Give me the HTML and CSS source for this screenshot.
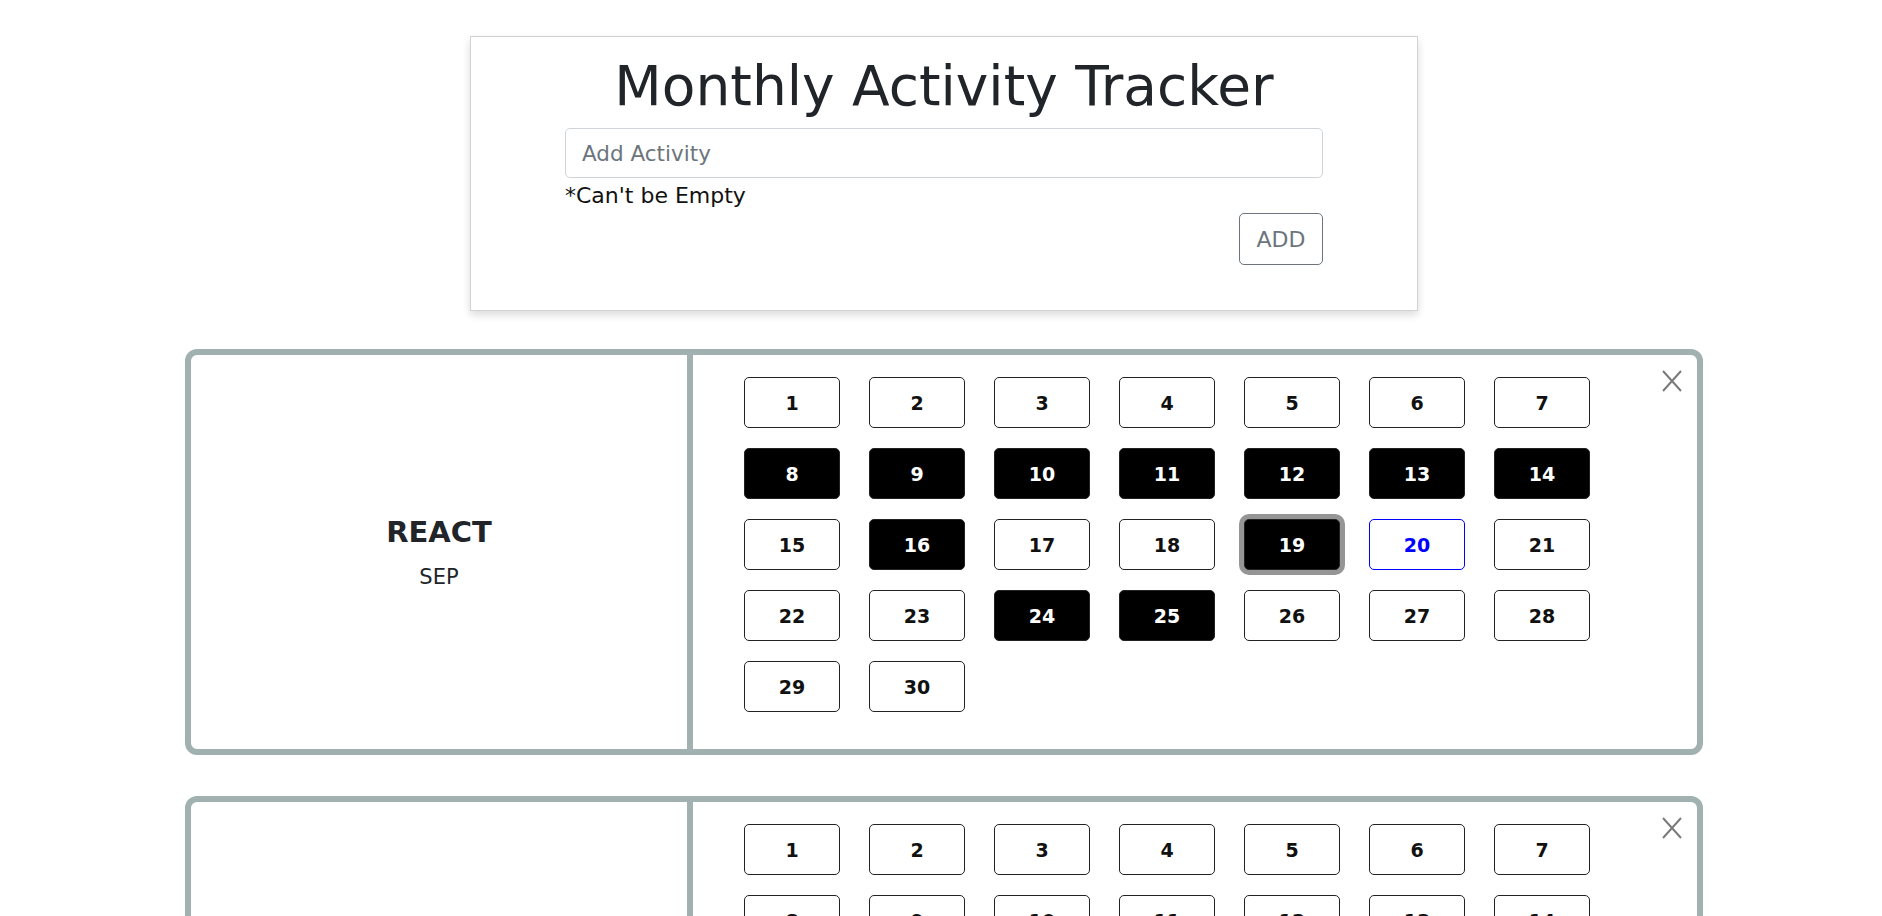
FILE: index.html
```html
<!DOCTYPE html>
<html lang="en">
<head>
<meta charset="utf-8">
<title>Monthly Activity Tracker</title>
<link rel="stylesheet" href="styles.css">
</head>
<body>
<div class="page">
  <section class="tracker-form">
    <h1 class="title">Monthly Activity Tracker</h1>
    <div class="form-body">
      <input class="activity-input" type="text" placeholder="Add Activity">
      <p class="hint">*Can't be Empty</p>
      <div class="actions"><button class="add-btn" type="button">ADD</button></div>
    </div>
  </section>

  <section class="activity-card">
    <div class="activity-info">
      <h2 class="activity-name">REACT</h2>
      <p class="activity-month">SEP</p>
    </div>
    <div class="activity-days">
      <div class="day-grid">
        <button class="day">1</button><button class="day">2</button><button class="day">3</button><button class="day">4</button><button class="day">5</button><button class="day">6</button><button class="day">7</button>
        <button class="day done">8</button><button class="day done">9</button><button class="day done">10</button><button class="day done">11</button><button class="day done">12</button><button class="day done">13</button><button class="day done">14</button>
        <button class="day">15</button><button class="day done">16</button><button class="day">17</button><button class="day">18</button><button class="day done focused">19</button><button class="day today">20</button><button class="day">21</button>
        <button class="day">22</button><button class="day">23</button><button class="day done">24</button><button class="day done">25</button><button class="day">26</button><button class="day">27</button><button class="day">28</button>
        <button class="day">29</button><button class="day">30</button>
      </div>
      <button class="close-btn" type="button" aria-label="Remove">
        <svg viewBox="0 0 20 22" width="20" height="22"><path d="M1 1 L19 21 M19 1 L1 21" stroke="#7a7a7a" stroke-width="2" fill="none"/></svg>
      </button>
    </div>
  </section>

  <section class="activity-card">
    <div class="activity-info">
      <h2 class="activity-name">JAVASCRIPT</h2>
      <p class="activity-month">SEP</p>
    </div>
    <div class="activity-days">
      <div class="day-grid">
        <button class="day">1</button><button class="day">2</button><button class="day">3</button><button class="day">4</button><button class="day">5</button><button class="day">6</button><button class="day">7</button>
        <button class="day">8</button><button class="day">9</button><button class="day">10</button><button class="day">11</button><button class="day">12</button><button class="day">13</button><button class="day">14</button>
        <button class="day">15</button><button class="day">16</button><button class="day">17</button><button class="day">18</button><button class="day">19</button><button class="day today">20</button><button class="day">21</button>
        <button class="day">22</button><button class="day">23</button><button class="day">24</button><button class="day">25</button><button class="day">26</button><button class="day">27</button><button class="day">28</button>
        <button class="day">29</button><button class="day">30</button>
      </div>
      <button class="close-btn" type="button" aria-label="Remove">
        <svg viewBox="0 0 20 22" width="20" height="22"><path d="M1 1 L19 21 M19 1 L1 21" stroke="#7a7a7a" stroke-width="2" fill="none"/></svg>
      </button>
    </div>
  </section>
</div>
</body>
</html>
```

FILE: styles.css
```css
* { box-sizing: border-box; }

html, body {
  margin: 0;
  background: #fff;
}

body {
  font-family: "DejaVu Sans", "Noto Sans", sans-serif;
  color: #212529;
}

.page {
  width: 1524px;
  margin: 0 auto;
  padding: 36px 0 40px 6px;
}

/* Header form card */
.tracker-form {
  width: 948px;
  margin: 0 auto;
  border: 1px solid #d2d2d2;
  background: #fff;
  box-shadow: 0 4px 8px rgba(0, 0, 0, 0.14);
  padding: 13px 0 45px;
}

.title {
  margin: 0;
  text-align: center;
  font-size: 55px;
  font-weight: 400;
  line-height: 73px;
  color: #212529;
}

.form-body {
  width: 758px;
  margin: 5px auto 0;
}

.activity-input {
  display: block;
  width: 100%;
  height: 50px;
  padding: 0 16px;
  border: 1px solid #ced4da;
  border-radius: 5px;
  font-family: inherit;
  font-size: 21.5px;
  color: #495057;
  background: #fff;
}

.activity-input::placeholder { color: #6c757d; }

.hint {
  margin: 3px 0 0;
  font-size: 22px;
  line-height: 30px;
  color: #111;
}

.actions {
  display: flex;
  justify-content: flex-end;
  margin-top: 2px;
}

.add-btn {
  width: 84px;
  height: 52px;
  border: 1px solid #6c757d;
  border-radius: 5px;
  background: #fff;
  color: #6c757d;
  font-family: inherit;
  font-size: 22px;
  padding: 0;
}

/* Activity cards */
.activity-card {
  display: flex;
  width: 1518px;
  margin-top: 38px;
  border: 6px solid #a0b1b0;
  border-radius: 12px;
  background: #fff;
}

.activity-card + .activity-card { margin-top: 41px; }

.activity-info {
  width: 502px;
  flex: none;
  border-right: 6px solid #a0b1b0;
  display: flex;
  flex-direction: column;
  align-items: center;
  justify-content: center;
}

.activity-name {
  margin: 0;
  font-size: 29px;
  font-weight: 700;
  line-height: 44px;
  color: #212529;
}

.activity-month {
  margin: 5px 0 0;
  font-size: 21px;
  line-height: 36px;
  color: #212529;
}

.activity-days {
  position: relative;
  flex: 1;
  padding: 22px 0 37px 51px;
}

.day-grid {
  display: grid;
  grid-template-columns: repeat(7, 96px);
  grid-auto-rows: 51px;
  column-gap: 29px;
  row-gap: 20px;
}

.day {
  border: 1px solid #222;
  border-radius: 5px;
  background: #fff;
  color: #111;
  font-family: inherit;
  font-size: 19px;
  font-weight: 700;
  padding: 0;
}

.day.done {
  background: #000;
  color: #fff;
}

.day.focused {
  box-shadow: 0 0 0 5px #959595;
}

.day.today {
  border-color: #0000ff;
  color: #0000ff;
}

.close-btn {
  position: absolute;
  top: 15px;
  right: 15px;
  width: 20px;
  height: 22px;
  padding: 0;
  border: 0;
  background: transparent;
  display: flex;
}
```
